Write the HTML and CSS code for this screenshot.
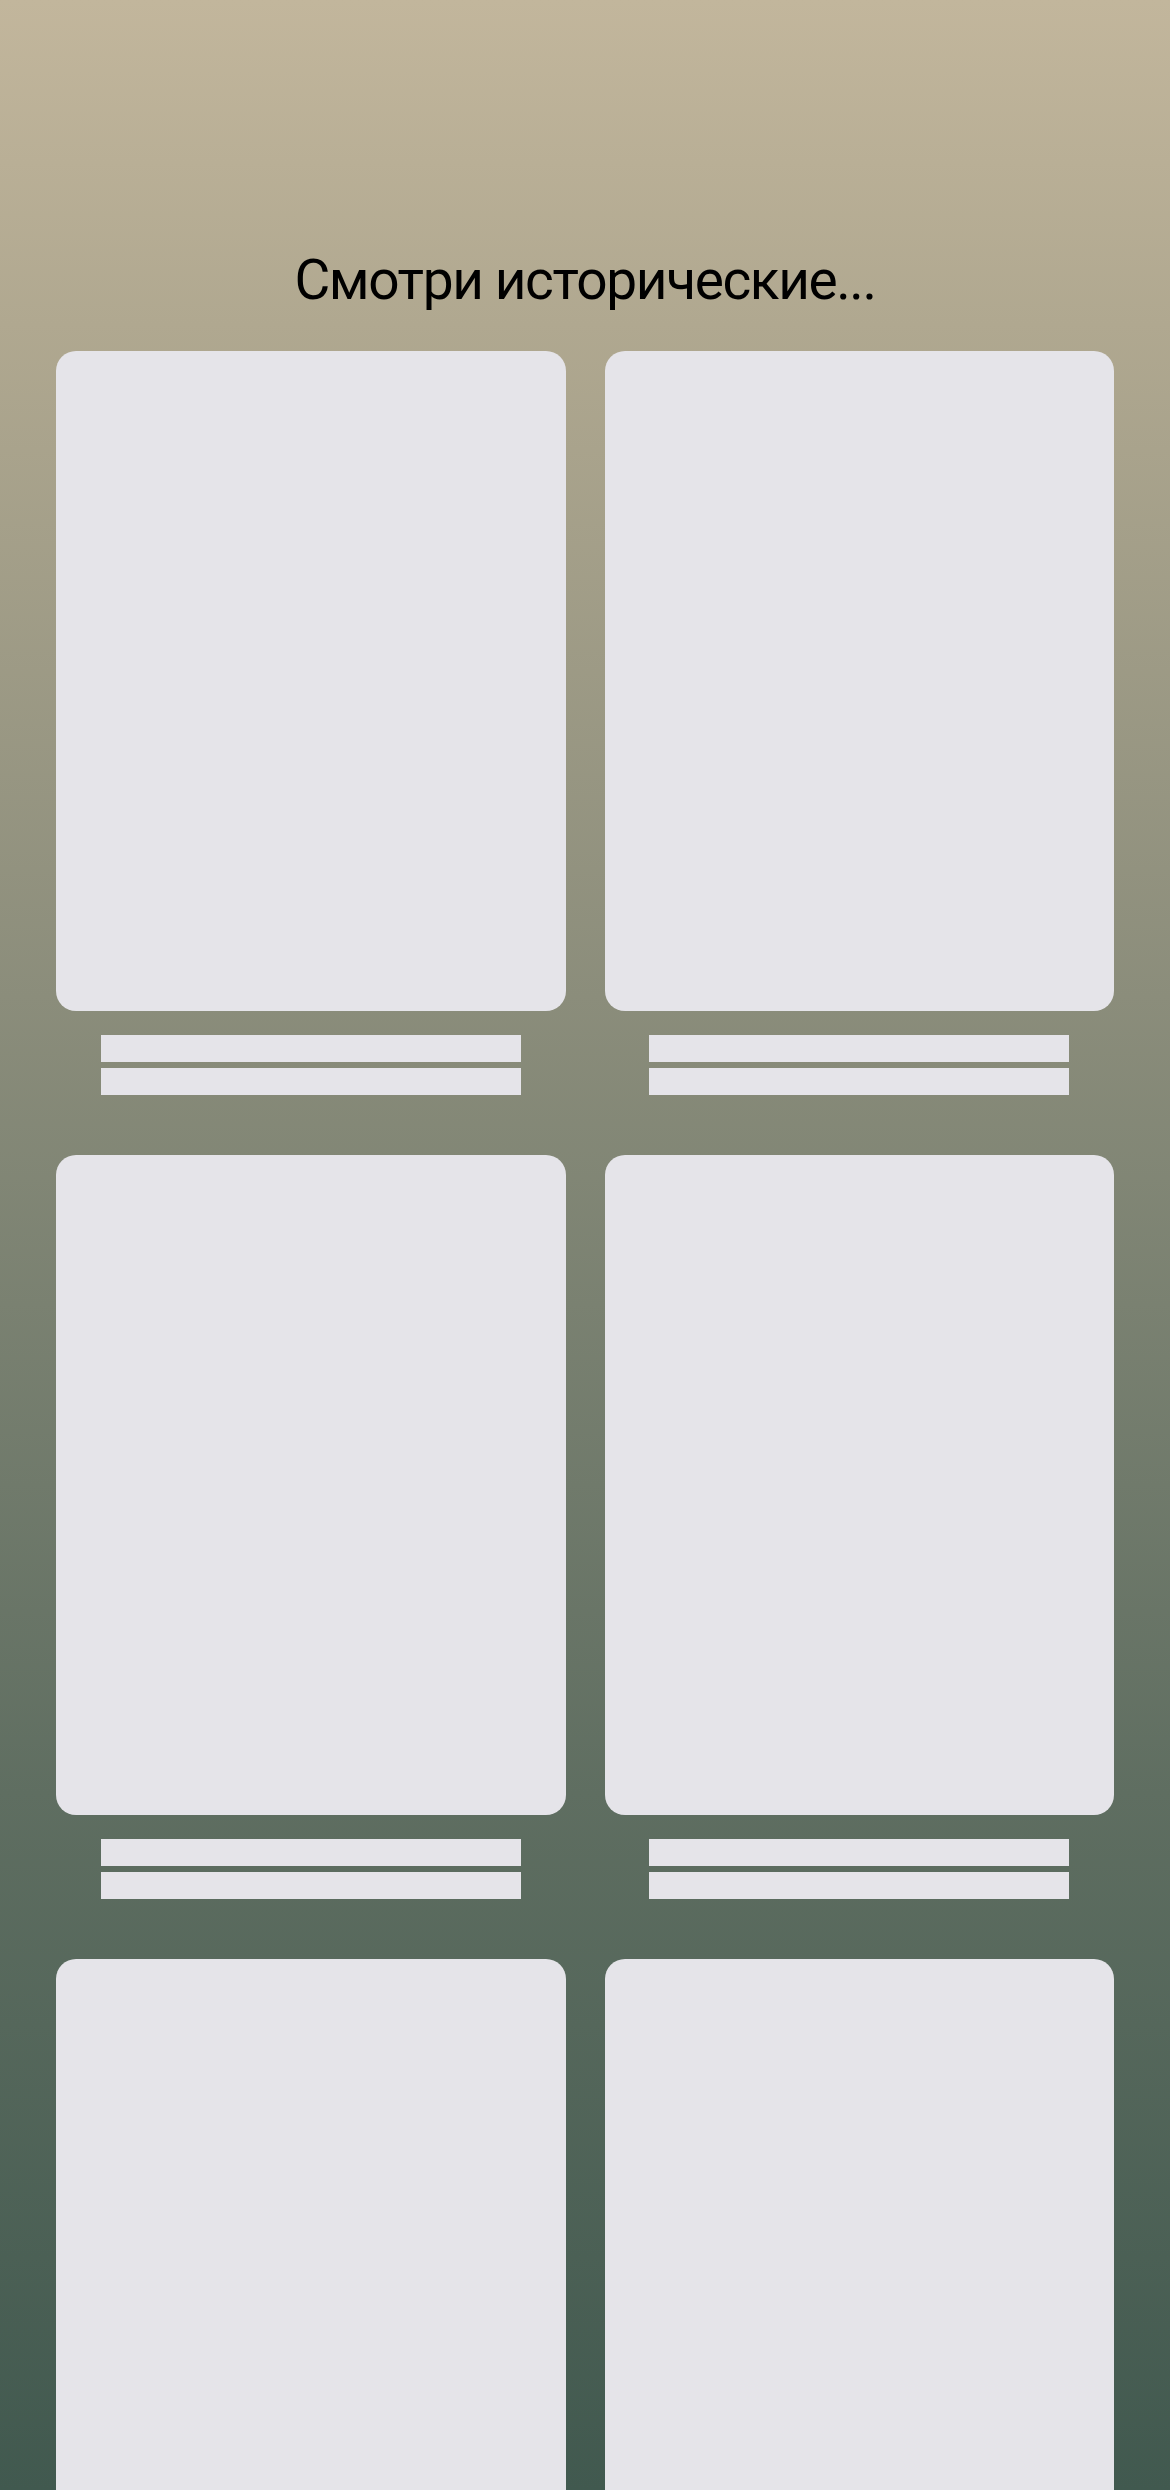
FILE: index.html
```html
<!DOCTYPE html>
<html lang="ru">
<head>
  <meta charset="UTF-8">
  <meta name="viewport" content="width=device-width, initial-scale=1.0">
  <title>Смотри исторические</title>
  <link rel="stylesheet" href="styles.css">
</head>
<body>
  <div class="page">
    <h1 class="title">Смотри исторические...</h1>

    <div class="grid">
      <div class="item">
        <div class="poster"></div>
        <div class="line"></div>
        <div class="line"></div>
      </div>
      <div class="item">
        <div class="poster"></div>
        <div class="line"></div>
        <div class="line"></div>
      </div>
      <div class="item">
        <div class="poster"></div>
        <div class="line"></div>
        <div class="line"></div>
      </div>
      <div class="item">
        <div class="poster"></div>
        <div class="line"></div>
        <div class="line"></div>
      </div>
      <div class="item">
        <div class="poster"></div>
        <div class="line"></div>
        <div class="line"></div>
      </div>
      <div class="item">
        <div class="poster"></div>
        <div class="line"></div>
        <div class="line"></div>
      </div>
    </div>
  </div>
</body>
</html>
```

FILE: styles.css
```css
html, body {
  margin: 0;
  padding: 0;
}

body {
  font-family: Roboto, "Liberation Sans", Arial, sans-serif;
  background: #41594f;
}

.page {
  height: 2490px;
  padding-top: 247px;
  box-sizing: border-box;
  overflow: hidden;
  background: linear-gradient(to bottom, #c2b69c 0%, #b0a890 13%, #8b8d7b 40%, #5f6e61 72%, #41594f 100%);
}

.title {
  margin: 0 0 38px;
  font-size: 55px;
  font-weight: 400;
  line-height: 66px;
  letter-spacing: -1.4px;
  color: #000;
  text-align: center;
}

.grid {
  display: grid;
  grid-template-columns: 1fr 1fr;
  column-gap: 39px;
  row-gap: 60px;
  padding: 0 56px;
}

.item {
  display: flex;
  flex-direction: column;
  align-items: center;
}

.poster {
  width: 100%;
  height: 660px;
  background: #e5e4e9;
  border-radius: 20px;
  margin-bottom: 24px;
}

.line {
  width: 420px;
  height: 27px;
  background: #e5e4e9;
}

.line + .line {
  margin-top: 6px;
}
```
